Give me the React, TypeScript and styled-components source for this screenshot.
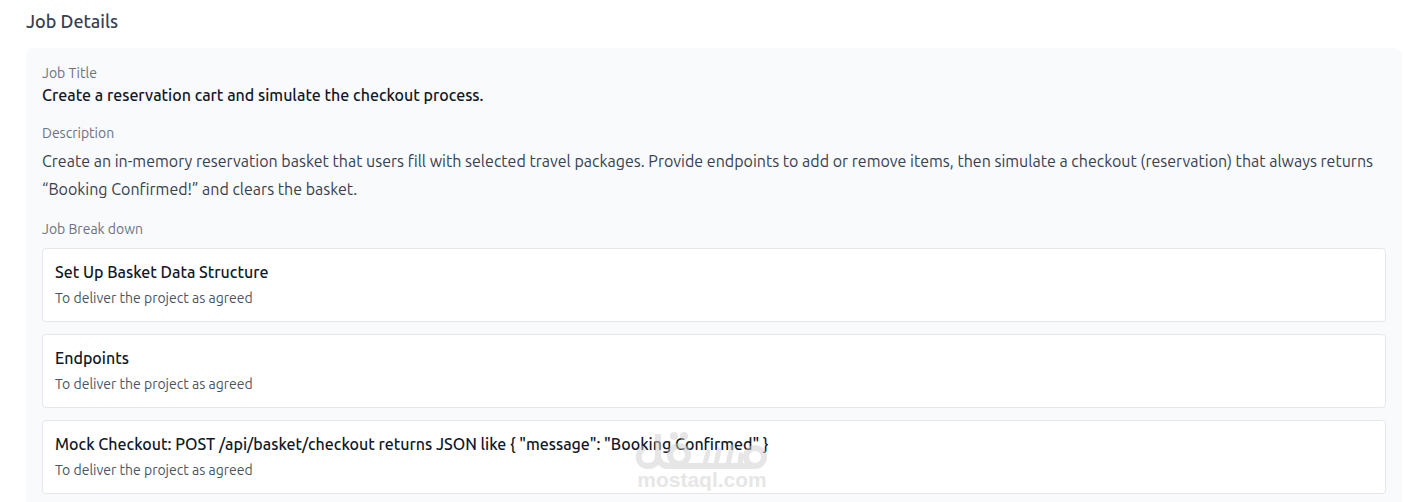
import React from "react";
import styled, { createGlobalStyle } from "styled-components";

const GlobalStyle = createGlobalStyle`
  *, *::before, *::after {
    box-sizing: border-box;
  }

  body {
    margin: 0;
    background: #ffffff;
    font-family: Ubuntu, "Noto Sans", sans-serif;
    font-size: 16px;
    line-height: 24px;
    color: #111827;
  }

  h2, h3, h4, p, ul {
    margin: 0;
    padding: 0;
  }
`;

const Page = styled.main`
  padding: 7px 1px 0 26px;
`;

const Heading = styled.h2`
  margin-bottom: 13px;
  font-size: 18px;
  font-weight: 500;
  line-height: 28px;
  color: #374151;
`;

const Panel = styled.section`
  display: flex;
  flex-direction: column;
  gap: 16px;
  padding: 15px 16px 8px;
  border-radius: 8px 8px 0 0;
  background: #f9fafb;
`;

const Label = styled.h3<{ $space?: number }>`
  margin-bottom: ${({ $space = 0 }) => $space}px;
  font-size: 14px;
  font-weight: 400;
  line-height: 20px;
  color: #6b7280;
`;

const JobTitle = styled.p`
  font-weight: 500;
`;

const Description = styled.p`
  line-height: 28px;
  color: #374151;
`;

const TaskList = styled.ul`
  display: flex;
  flex-direction: column;
  gap: 12px;
  list-style: none;
`;

const TaskCard = styled.li`
  position: relative;
  padding: 11px 12px 13px;
  border: 1px solid #e5e7eb;
  border-radius: 4px;
  background: #ffffff;
`;

const TaskTitle = styled.h4`
  margin-bottom: 4px;
  font-size: 16px;
  font-weight: 500;
`;

const TaskNote = styled.p`
  font-size: 14px;
  line-height: 20px;
  color: #4b5563;
`;

const Watermark = styled.div`
  position: absolute;
  top: 11px;
  left: 50%;
  width: 136px;
  margin-left: -80px;
  opacity: 0.5;
  color: #cfcfcf;
  text-align: center;
  pointer-events: none;
`;

const WatermarkLogo = styled.svg`
  display: block;
  width: 136px;
  height: 38px;
`;

const WatermarkName = styled.span`
  display: block;
  font-family: "Liberation Sans", Arial, sans-serif;
  font-size: 21px;
  font-weight: 700;
  line-height: 20px;
`;

const tasks = [
  { title: "Set Up Basket Data Structure", note: "To deliver the project as agreed" },
  { title: "Endpoints", note: "To deliver the project as agreed" },
  {
    title: 'Mock Checkout: POST /api/basket/checkout returns JSON like { "message": "Booking Confirmed" }',
    note: "To deliver the project as agreed",
    marked: true,
  },
];

function MostaqlMark() {
  return (
    <Watermark>
      <WatermarkLogo viewBox="0 0 136 38" fill="none" stroke="currentColor" strokeWidth="6" aria-hidden="true">
        <path d="M10 16C2 20 3 34 14 34C21 34 24 30 24 24V2M24 25Q26 34 35 34H121" />
        <circle cx="45" cy="23" r="9" />
        <path d="M71 32L74 20M82 32L85 18M94 32L98 15M106 32L107 23" strokeWidth="5" strokeLinecap="round" />
        <circle cx="121" cy="25" r="9" />
        <circle cx="40" cy="4" r="4" fill="currentColor" stroke="none" />
        <circle cx="50" cy="4" r="4" fill="currentColor" stroke="none" />
      </WatermarkLogo>
      <WatermarkName>mostaql.com</WatermarkName>
    </Watermark>
  );
}

export default function App() {
  return (
    <>
      <GlobalStyle />
      <Page>
        <Heading>Job Details</Heading>
        <Panel>
          <div>
            <Label>Job Title</Label>
            <JobTitle>Create a reservation cart and simulate the checkout process.</JobTitle>
          </div>
          <div>
            <Label $space={4}>Description</Label>
            <Description>
              Create an in-memory reservation basket that users fill with selected travel packages. Provide
              endpoints to add or remove items, then simulate a checkout (reservation) that always returns
              “Booking Confirmed!” and clears the basket.
            </Description>
          </div>
          <div>
            <Label $space={9}>Job Break down</Label>
            <TaskList>
              {tasks.map((task) => (
                <TaskCard key={task.title}>
                  <TaskTitle>{task.title}</TaskTitle>
                  <TaskNote>{task.note}</TaskNote>
                  {task.marked && <MostaqlMark />}
                </TaskCard>
              ))}
            </TaskList>
          </div>
        </Panel>
      </Page>
    </>
  );
}
